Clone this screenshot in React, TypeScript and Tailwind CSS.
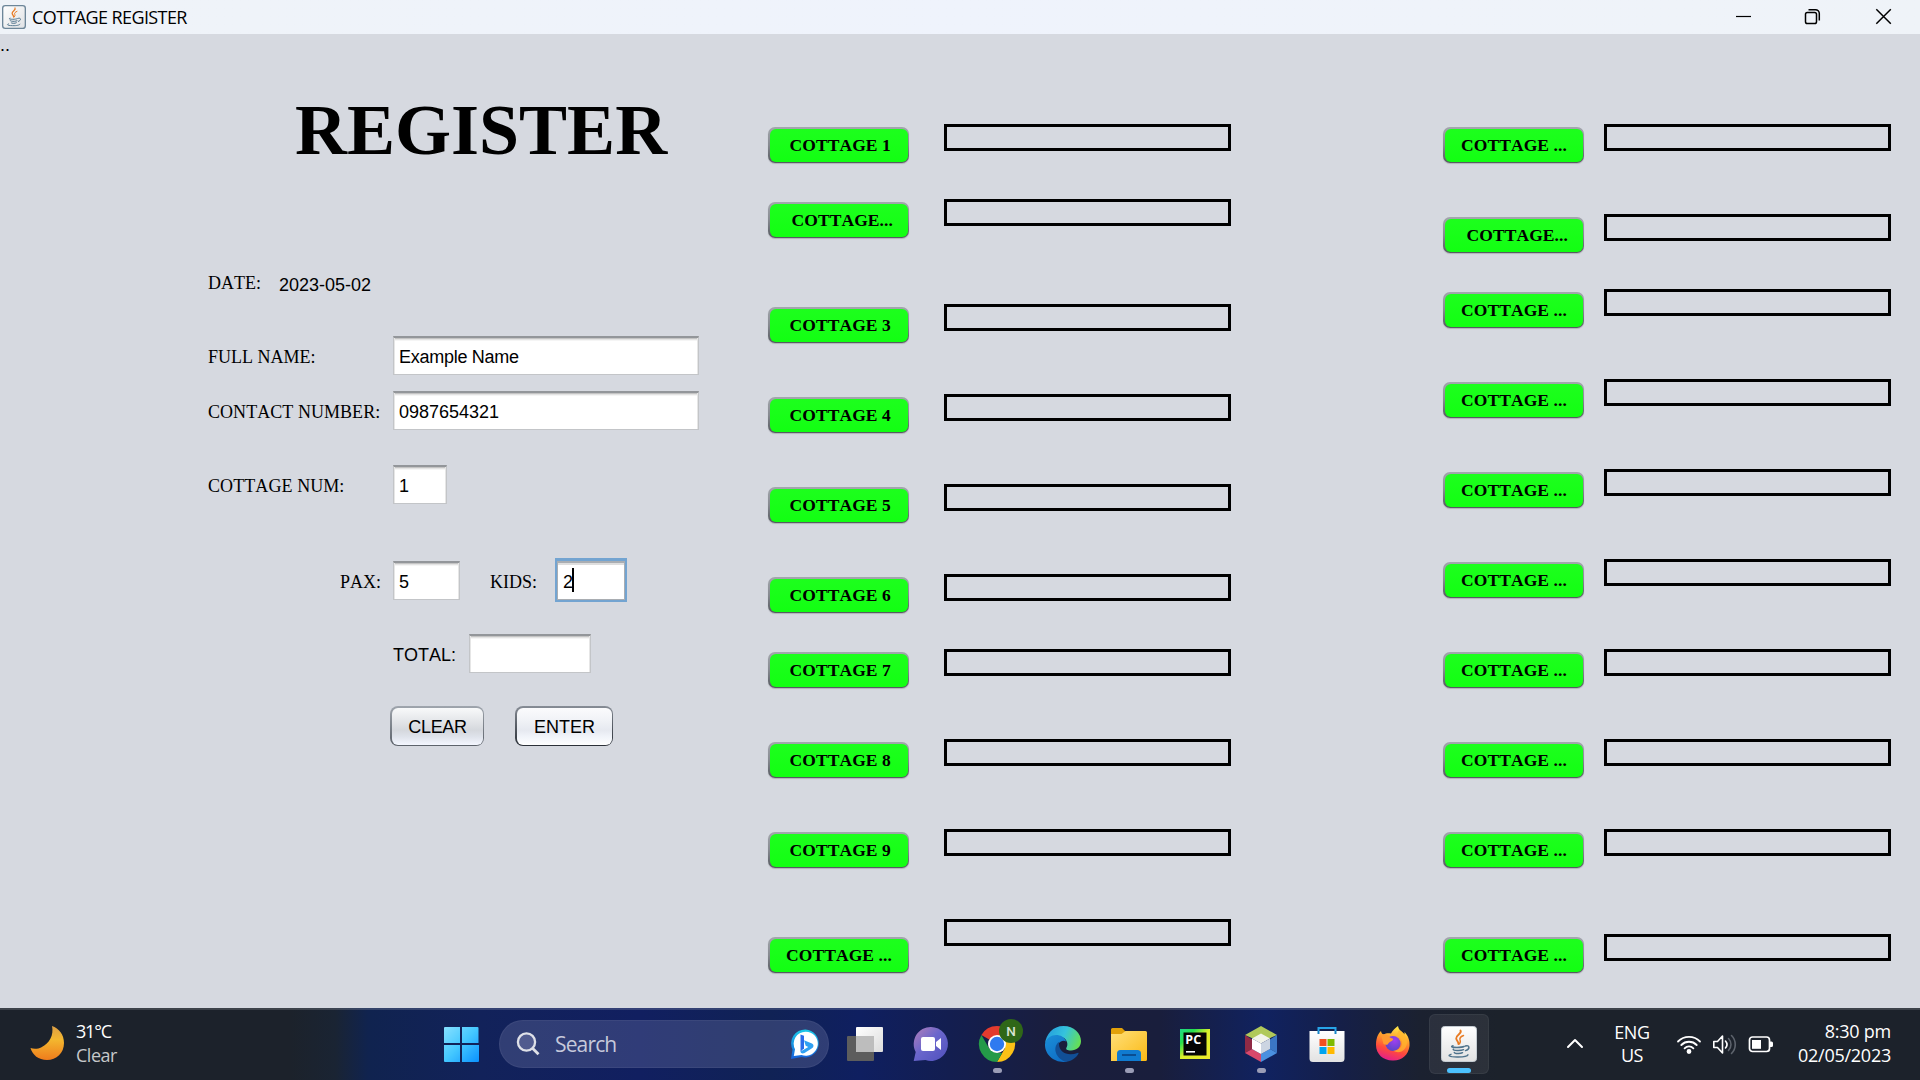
import React from "react";

const SERIF = "font-['Liberation_Serif','Times_New_Roman',serif] [font-kerning:none]";
const SANS = "font-['Liberation_Sans',Arial,sans-serif] [font-kerning:none]";

type Row = { label: string; row: string; shift?: string; pad?: string };

const leftRows: Row[] = [
  { label: "COTTAGE 1", row: "h-[75px]", pad: "pl-[20px]" },
  { label: "COTTAGE...", row: "h-[105px]", pad: "pl-[22px]" },
  { label: "COTTAGE 3", row: "h-[90px]", pad: "pl-[20px]" },
  { label: "COTTAGE 4", row: "h-[90px]", pad: "pl-[20px]" },
  { label: "COTTAGE 5", row: "h-[90px]", pad: "pl-[20px]" },
  { label: "COTTAGE 6", row: "h-[75px]", pad: "pl-[20px]" },
  { label: "COTTAGE 7", row: "h-[90px]", pad: "pl-[20px]" },
  { label: "COTTAGE 8", row: "h-[90px]", pad: "pl-[20px]" },
  { label: "COTTAGE 9", row: "h-[90px]", pad: "pl-[20px]" },
  { label: "COTTAGE ...", row: "h-[60px]", pad: "pl-[16.5px]", shift: "mt-[18px]" },
];

const rightRows: Row[] = [
  { label: "COTTAGE ...", row: "h-[90px]", pad: "pl-[16.5px]" },
  { label: "COTTAGE...", row: "h-[75px]", pad: "pl-[22px]" },
  { label: "COTTAGE ...", row: "h-[90px]", pad: "pl-[16.5px]" },
  { label: "COTTAGE ...", row: "h-[90px]", pad: "pl-[16.5px]" },
  { label: "COTTAGE ...", row: "h-[90px]", pad: "pl-[16.5px]" },
  { label: "COTTAGE ...", row: "h-[90px]", pad: "pl-[16.5px]" },
  { label: "COTTAGE ...", row: "h-[90px]", pad: "pl-[16.5px]" },
  { label: "COTTAGE ...", row: "h-[90px]", pad: "pl-[16.5px]" },
  { label: "COTTAGE ...", row: "h-[105px]", pad: "pl-[16.5px]" },
  { label: "COTTAGE ...", row: "h-[60px]", pad: "pl-[16.5px]" },
];

function CottageColumn({ rows, gap }: { rows: Row[]; gap: string }) {
  return (
    <div className="flex flex-col pt-[90px]">
      {rows.map((r, i) => (
        <div key={i} className={`flex items-start ${gap} ${r.row}`}>
          <button
            className={`${r.shift ?? "mt-[3px]"} h-[36px] w-[141px] shrink-0 rounded-[7px] bg-gradient-to-b from-[#a3a7ad] via-[#868a90] to-[#55595f] p-[1.5px] shadow-[0_1px_1px_rgba(0,0,0,0.18)]`}
          >
            <span
              className={`flex h-full w-full items-center rounded-[6px] bg-gradient-to-b from-[#1dff1d] to-[#12ff12] ${r.pad} ${SERIF} whitespace-pre pb-[1px] text-left text-[17.5px] font-bold leading-[20px] tracking-[0.08px] text-black`}
            >
              {r.label}
            </span>
          </button>
          <div className="h-[27px] w-[287px] shrink-0 border-[3px] border-black" />
        </div>
      ))}
    </div>
  );
}

function Field({ value, width, tracking = "" }: { value: string; width: string; tracking?: string }) {
  return (
    <div
      className={`${width} ${tracking} ${SANS} flex h-[39px] shrink-0 items-center border border-t-2 border-[#c3c5c8] border-t-[#93969a] bg-white pl-[5px] pt-[2px] text-[18px] leading-[20px] text-black shadow-[inset_1px_0_0_#e6e6e6,inset_-1px_0_0_#e6e6e6,inset_0_1px_0_#c4c4c4,inset_0_2px_0_#e4e4e4,inset_0_3px_0_#f5f5f5]`}
    >
      {value}
    </div>
  );
}

function Label({ children, className }: { children: React.ReactNode; className: string }) {
  return <div className={`${SERIF} shrink-0 whitespace-pre text-[18px] leading-[20px] text-black ${className}`}>{children}</div>;
}

function JavaCup() {
  return (
    <g fill="none" strokeLinecap="round">
      <path d="M19.5 4.5c2 3-4.800 4.500-4.300 8 .2 1.800 2.300 3 2.300 5.500" stroke="#e87a22" strokeWidth="1.900" />
      <path d="M22.500 9.500c-3 1.300-4 2.600-3.500 4.200.5 1.200 1 2-.5 4" stroke="#e87a22" strokeWidth="1.500" />
      <path d="M12 19.800c-3 .9-.5 1.600 4 1.600 3.200 0 6-.4 7-.9M12.300 23.200c-.8 1.600 7.500 1.900 10.200.5M13.300 26.400c.3 1.500 6.300 1.600 8.200.3M24.300 20c4.500-1.600 5 3.300.2 4.600" stroke="#4f738c" strokeWidth="1.500" />
      <path d="M10 28.300c-3.500 1-2.500 2.600 6 2.700 6 .1 10.500-.7 11-2.200" stroke="#4f738c" strokeWidth="1.400" />
    </g>
  );
}

function TitleBar() {
  return (
    <header className="flex h-[34px] items-center bg-gradient-to-r from-[#eff3f8] via-[#eff3fc] to-[#eff3f8]">
      <svg className="ml-[2px] h-[24px] w-[24px]" viewBox="0 0 36 36">
        <defs>
          <linearGradient id="jt" x1="0" y1="0" x2="1" y2="1">
            <stop offset="0" stopColor="#ffffff" />
            <stop offset="1" stopColor="#dfe1e4" />
          </linearGradient>
        </defs>
        <rect x="1" y="1" width="34" height="34" rx="4" fill="url(#jt)" stroke="#6d8699" strokeWidth="2" />
        <JavaCup />
      </svg>
      <h1 className="ml-[6px] font-['Open_Sans',sans-serif] text-[18px] leading-[24px] tracking-[-0.6px] text-black">
        COTTAGE REGISTER
      </h1>
      <div className="ml-auto flex items-center text-black">
        <svg className="h-[34px] w-[69px]" viewBox="0 0 69 34" fill="none" stroke="currentColor">
          <path d="M25 16.500h15" strokeWidth="1.200" />
        </svg>
        <svg className="h-[34px] w-[69px]" viewBox="0 0 69 34" fill="none" stroke="currentColor" strokeWidth="1.500">
          <rect x="25.500" y="12.500" width="11" height="11" rx="1.800" />
          <path d="M28.500 9.700h7a3.800 3.800 0 0 1 3.800 3.800v7" />
        </svg>
        <svg className="h-[34px] w-[71px]" viewBox="0 0 71 34" fill="none" stroke="currentColor" strokeWidth="1.500">
          <path d="M27.300 9.300l14.500 14.500M41.800 9.300l-14.500 14.500" />
        </svg>
      </div>
    </header>
  );
}

function RegisterForm() {
  return (
    <section className="w-[768px] shrink-0">
      <div className={`${SANS} h-[37px] pt-[1px] text-[18px] leading-[20px] text-black`}>..</div>
      <h2 className={`${SERIF} ml-[295px] mt-[19px] text-[72px] font-bold leading-[80px] text-black`}>REGISTER</h2>
      <div className="ml-[208px] mt-[103px] flex h-[24px] items-start">
        <Label className="w-[71px]">DATE:</Label>
        <div className={`${SANS} mt-[2px] text-[18px] leading-[20px] text-black`}>2023-05-02</div>
      </div>
      <div className="ml-[208px] mt-[39px] flex h-[39px] items-center">
        <Label className="w-[185px] pt-[3px]">FULL NAME:</Label>
        <Field value="Example Name" width="w-[306px]" tracking="tracking-[-0.27px]" />
      </div>
      <div className="ml-[208px] mt-[16px] flex h-[39px] items-center">
        <Label className="w-[185px] pt-[3px] tracking-[0.05px]">CONTACT NUMBER:</Label>
        <Field value="0987654321" width="w-[306px]" />
      </div>
      <div className="ml-[208px] mt-[35px] flex h-[39px] items-center">
        <Label className="w-[185px] pt-[3px] tracking-[0.08px]">COTTAGE NUM:</Label>
        <Field value="1" width="w-[54px]" />
      </div>
      <div className="ml-[340px] mt-[54px] flex h-[45px] items-center">
        <Label className="w-[53px] pt-[3px]">PAX:</Label>
        <Field value="5" width="w-[67px]" />
        <Label className="ml-[30px] w-[65px] pt-[3px]">KIDS:</Label>
        <div className="-mt-[1px] flex h-[44px] w-[72px] items-center border-[2.5px] border-t-[3px] border-[#73a4d1]">
          <div
            className={`${SANS} flex h-full w-full items-center border border-t-2 border-[#a9adb2] bg-white pl-[5px] pt-[1px] text-[18px] leading-[20px] text-black shadow-[inset_0_2px_0_#dedede]`}
          >
            <span>2</span>
            <span className="-ml-[1px] -mt-[4px] h-[24px] w-[2px] bg-black" />
          </div>
        </div>
      </div>
      <div className="ml-[393px] mt-[31px] flex h-[39px] items-center">
        <div className={`${SANS} w-[76px] pt-[2px] text-[18px] leading-[20px] text-black`}>TOTAL:</div>
        <Field value="" width="w-[122px]" />
      </div>
      <div className={`${SANS} ml-[390px] mt-[33px] flex gap-[32px] text-[18px] leading-[20px] text-black`}>
        <button className="h-[40px] w-[94px] rounded-[8px] bg-gradient-to-b from-[#9fa5ad] to-[#5c626a] p-[1.500px]">
          <span className="flex h-full w-full items-center justify-center rounded-[6px] bg-[linear-gradient(#f8f9fa_0%,#e4e6e9_35%,#d5d8dd_60%,#dfe3eb_78%,#f4f7ff_100%)] pt-[2px] pl-[1px] tracking-[-0.300px]">
            CLEAR
          </span>
        </button>
        <button className="-ml-[1px] h-[40px] w-[98px] rounded-[8px] bg-gradient-to-b from-[#878d96] to-[#2b3038] p-[1.500px]">
          <span className="flex h-full w-full items-center justify-center rounded-[6px] bg-[linear-gradient(#fbfbfd_0%,#f0f2f6_35%,#e6e9f0_60%,#f1f4fa_78%,#ffffff_100%)] pt-[2px] pl-[1px]">
            ENTER
          </span>
        </button>
      </div>
    </section>
  );
}

function TaskSlot({ children, running, active }: { children: React.ReactNode; running?: boolean; active?: boolean }) {
  return (
    <div className="relative flex h-[72px] w-[66px] shrink-0 items-center justify-center">
      {active && <div className="absolute left-[3px] top-[6px] h-[60px] w-[60px] rounded-[6px] border border-white/[0.05] bg-white/[0.07]" />}
      <svg className="relative h-[36px] w-[36px] overflow-visible" viewBox="0 0 36 36">
        {children}
      </svg>
      {running && <div className="absolute left-[29px] top-[60px] h-[5px] w-[9px] rounded-full bg-[#9a9db6]" />}
      {active && <div className="absolute left-[21px] top-[60px] h-[5px] w-[24px] rounded-full bg-[#4cc2ff]" />}
    </div>
  );
}

function Gradients() {
  return (
    <svg className="absolute h-0 w-0">
      <defs>
        <linearGradient id="moon" x1="0" y1="0" x2="0" y2="1">
          <stop offset="0" stopColor="#dd9f45" /><stop offset=".4" stopColor="#f3b72f" /><stop offset="1" stopColor="#ef7c1c" />
        </linearGradient>
        <linearGradient id="win" gradientUnits="userSpaceOnUse" x1="0" y1="0" x2="36" y2="36">
          <stop offset="0" stopColor="#8be2ff" /><stop offset=".5" stopColor="#45c8ff" /><stop offset="1" stopColor="#0a91ff" />
        </linearGradient>
        <linearGradient id="bing" x1="0" y1="0" x2="0" y2="1">
          <stop offset="0" stopColor="#1cc9e8" /><stop offset="1" stopColor="#1560dc" />
        </linearGradient>
        <linearGradient id="chat" x1="0" y1="0" x2="1" y2="1">
          <stop offset="0" stopColor="#b47fb8" /><stop offset=".45" stopColor="#6a66cc" /><stop offset="1" stopColor="#4f50bd" />
        </linearGradient>
        <linearGradient id="tvw" x1="0" y1="0" x2="1" y2="1">
          <stop offset="0" stopColor="#ffffff" /><stop offset="1" stopColor="#dcdcdc" />
        </linearGradient>
        <linearGradient id="edgeTop" x1="0" y1="0.300" x2="1" y2="0.600">
          <stop offset="0" stopColor="#249ddd" /><stop offset=".5" stopColor="#35c3dd" /><stop offset="1" stopColor="#66e052" />
        </linearGradient>
        <linearGradient id="edgeLow" x1="0" y1="0" x2="0.600" y2="1">
          <stop offset="0" stopColor="#1b8fd8" /><stop offset="1" stopColor="#0f6fc6" />
        </linearGradient>
        <linearGradient id="folder" x1="0" y1="0" x2="1" y2="1">
          <stop offset="0" stopColor="#ffe07a" /><stop offset="1" stopColor="#fbb914" />
        </linearGradient>
        <linearGradient id="pc" x1="0" y1="0" x2="1" y2="1">
          <stop offset="0" stopColor="#21d789" /><stop offset=".25" stopColor="#26e04d" /><stop offset=".5" stopColor="#d9f02b" /><stop offset="1" stopColor="#f0e92c" />
        </linearGradient>
        <linearGradient id="fox" x1="0.700" y1="0" x2="0.400" y2="1">
          <stop offset="0" stopColor="#fff04d" /><stop offset=".4" stopColor="#ff9a2a" /><stop offset=".7" stopColor="#ff4a3c" /><stop offset="1" stopColor="#e5208a" />
        </linearGradient>
        <radialGradient id="globe" cx=".6" cy=".3" r=".7">
          <stop offset="0" stopColor="#a040f0" /><stop offset="1" stopColor="#5a45c8" />
        </radialGradient>
        <linearGradient id="tile" x1="0" y1="0" x2="0" y2="1">
          <stop offset="0" stopColor="#ffffff" /><stop offset="1" stopColor="#e2e2e2" />
        </linearGradient>
      </defs>
    </svg>
  );
}

function Taskbar() {
  return (
    <footer className="relative flex h-[72px] items-center bg-[linear-gradient(90deg,#1c222b_0px,#1c222b_290px,#1a2433_335px,#10234f_368px,#12225a_480px,#111f60_640px,#102255_770px,#0f1f60_860px,#131e50_950px,#1a1e3c_1060px,#191e3c_1160px,#102260_1265px,#151f48_1340px,#1b2130_1420px,#1c222b_1500px,#1c222b_1920px)] font-['Open_Sans',sans-serif] shadow-[inset_0_2px_0_rgba(255,255,255,0.15)]">
      <Gradients />
      <svg className="mb-[2px] ml-[29px] h-[36px] w-[36px] shrink-0" viewBox="0 0 36 36">
        <path d="M23 1c7 2.500 12 8.500 12 17 0 10-7.500 17-17 17C9.500 35 3.500 30 1.500 23c3 1.200 7.500 1.200 11-.8C20.500 18.500 25 10 23 1z" fill="url(#moon)" />
      </svg>
      <div className="mb-[2px] ml-[11px] w-[367px] text-[18px] leading-[24px] text-white">
        <div className="tracking-[-1.200px]">31°C</div>
        <div className="tracking-[-0.500px] text-[#c6c8ca]">Clear</div>
      </div>
      <svg className="h-[36px] w-[36px] shrink-0" viewBox="0 0 36 36" fill="url(#win)">
        <path d="M2 1h15v16H1V2a1 1 0 0 1 1-1zM19 1h15.500a1 1 0 0 1 1 1v15H19zM1 19h16v17H2a1 1 0 0 1-1-1zM19 19h17v16a1 1 0 0 1-1 1H19z" />
      </svg>
      <div className="ml-[20px] flex h-[48px] w-[330px] shrink-0 items-center rounded-full border border-white/5 bg-[#7a80b0]/30">
        <svg className="ml-[16px] h-[24px] w-[24px]" viewBox="0 0 24 24" fill="none" stroke="#dfe1e8" strokeWidth="2.300">
          <circle cx="10.500" cy="10" r="8.600" fill="#9aa0cc" fillOpacity=".3" />
          <path d="M16.500 16.200l6 6" strokeWidth="2.800" />
        </svg>
        <span className="ml-[15px] text-[21px] leading-[28px] tracking-[-0.850px] text-[#c6c9db]">Search</span>
        <svg className="ml-auto mr-[8px] h-[32px] w-[30px]" viewBox="0 0 30 32">
          <path d="M15.500 1.500a14 14 0 1 1-4 27.600L1 31l1.500-9.500A14 14 0 0 1 15.500 1.500z" fill="url(#bing)" />
          <path d="M15.500 3.700a12 12 0 1 1-4 23.200L3.800 28l1.200-6.800A12 12 0 0 1 15.500 3.700z" fill="#fff" />
          <path d="M10.500 6.500l3.500 1.200v12.600l-3.500 3.400z" fill="#2a6bea" />
          <path d="M14 12.200l8 3.200c2 1 2 3.600 0 4.900L14.500 25c-2 1-4 .2-4-1.500l3.500-2 4.300-2.600-2.600-1.100z" fill="#2fa0f2" />
        </svg>
      </div>
      <div className="ml-[3px] flex">
        <TaskSlot>
          <rect x="0" y="10" width="27" height="25" rx="1" fill="#5d5d5d" />
          <rect x="9" y="1" width="27" height="25" rx="1" fill="url(#tvw)" />
          <path d="M9 10h18v16H10a1 1 0 0 1-1-1z" fill="#bdbdbd" />
        </TaskSlot>
        <TaskSlot>
          <path d="M18 1a17 17 0 1 1-5.500 33.100L.7 35l2-9A17 17 0 0 1 18 1z" fill="url(#chat)" />
          <rect x="8" y="11" width="14" height="14" rx="2" fill="#fff" />
          <path d="M23 16l5-4v12l-5-4z" fill="#fff" />
        </TaskSlot>
        <TaskSlot running>
          <path d="M18 18L2.400 9A18 18 0 0 1 33.600 9z" fill="#e33b2e" />
          <path d="M18 9h15.600A18 18 0 0 1 18 36l7.800-13.500z" fill="#fbc116" />
          <path d="M2.400 9l7.800 13.500L18 27h5.200L18 36A18 18 0 0 1 2.400 9z" fill="#249a48" />
          <circle cx="18" cy="18" r="9" fill="#fff" />
          <circle cx="18" cy="18" r="7.200" fill="#2f7af0" />
          <circle cx="32" cy="5" r="12" fill="#2f6718" />
          <text x="32" y="10" textAnchor="middle" fontSize="13.500" fontWeight="500" fill="#d9e3d3" fontFamily="Roboto, sans-serif">N</text>
        </TaskSlot>
        <TaskSlot>
          <path d="M0 18C1 8 8 0 18.500 0 29 0 36 7.500 36 15c0 6-4.500 9.500-10 9.500-4 0-5.500-1.200-4.500-3 1.700-2.700 1-7-2.500-9.500C13 8 3 9.500 0 18z" fill="url(#edgeTop)" />
          <path d="M0 18C2 9.500 11 7 17 10.500c2.500 1.500 3.800 3.500 4 5-2-1.700-6-.8-8.300 3-3 6 1 15 9.800 17C11 38-.5 29.500 0 18z" fill="url(#edgeLow)" />
          <path d="M14 16c-6 4-5 15 6 19.600 5 .6 11-3 13.500-8 .3-.8-.4-1-1-.7C23 30.500 14 26.500 14 18z" fill="#114f96" />
        </TaskSlot>
        <TaskSlot running>
          <path d="M0 3.500A1.500 1.500 0 0 1 1.500 2H11l4 4v4H0z" fill="#e2a10a" />
          <path d="M0 8h10.500l4-3H34.500A1.500 1.500 0 0 1 36 6.500V33.500A1.500 1.500 0 0 1 34.500 35H0z" fill="url(#folder)" />
          <path d="M6 35v-7.500a3.500 3.500 0 0 1 3.500-3.500h17a3.500 3.500 0 0 1 3.500 3.500V35z" fill="#107bd0" />
          <path d="M11 29h14" stroke="#0a4d91" strokeWidth="2" />
        </TaskSlot>
        <TaskSlot>
          <rect x="3" y="3" width="30" height="30" fill="url(#pc)" />
          <rect x="6.500" y="6.500" width="23" height="23" fill="#050505" />
          <text x="8.300" y="18" fontSize="12.500" fontWeight="700" fill="#fff" fontFamily="Open Sans, sans-serif">PC</text>
          <rect x="9" y="25" width="9" height="1.600" fill="#fff" />
        </TaskSlot>
        <TaskSlot running>
          <path d="M18 0l16 9-9 4-7-4-7 4-9-4z" fill="#b0c95a" />
          <path d="M2 9l7 4.500v9.500l-7 4z" fill="#8f2a45" />
          <path d="M2 27l7-4 9 5v8z" fill="#d9486b" />
          <path d="M34 9l-7 4.500v9.500l7 4z" fill="#3b76c4" />
          <path d="M34 27l-7-4-9 5v8z" fill="#4a90e0" />
          <path d="M18 7.500l9 5-9 5-9-5z" fill="#f1f3ea" />
          <path d="M9 12.500l9 5v10.500l-9-5z" fill="#fff" />
          <path d="M27 12.500l-9 5v10.500l9-5z" fill="#ccd5e2" />
        </TaskSlot>
        <TaskSlot>
          <path d="M9.500 8V2h17v6" fill="none" stroke="#27a4e8" strokeWidth="2" />
          <path d="M.5 5h35v27.500a3.500 3.500 0 0 1-3.500 3.500H4a3.500 3.500 0 0 1-3.500-3.500z" fill="url(#tile)" />
          <path d="M9.500 5v3M26.500 5v3" stroke="#1783c6" strokeWidth="2" />
          <rect x="10.500" y="13" width="7" height="7" fill="#f25022" />
          <rect x="18.500" y="13" width="7" height="7" fill="#7fba00" />
          <rect x="10.500" y="21" width="7" height="7" fill="#00a4ef" />
          <rect x="18.500" y="21" width="7" height="7" fill="#ffb900" />
        </TaskSlot>
        <TaskSlot>
          <path d="M3 9c.8-1.200 1.500-3 3-4 .3 2 1 3 2.500 3.500C11 7 13.500 7 16 7.500 17.500 4 20.500 2 23 0c.5 3 2 4.500 4 6 1 .9 1.800 1.600 2.500 2.500V6c4 4 5.500 9 5 14-1 9-8 15-17 14.500C8 34.500 1 28 1 19c0-4 .7-7.500 2-10z" fill="url(#fox)" />
          <circle cx="18" cy="17.500" r="7.600" fill="url(#globe)" />
          <path d="M6 9c4-2 7 .8 9 2.500 1.500 1 3.500.7 3 2.200-.8 1.800-3.500 1.800-4.500 3.600-.8 2.200-3.500 1.500-5 .7z" fill="#ff9a30" />
          <path d="M21 10c3 0 6 3 6 7-.2 5-5 8-9 7.600 7 4.500 14-1 14-8.600C31.500 9 27 5 24 4z" fill="#ffb52e" opacity=".75" />
        </TaskSlot>
        <TaskSlot active>
          <rect x=".5" y=".5" width="35" height="35" rx="3" fill="url(#tile)" stroke="#c5ccd2" />
          <JavaCup />
        </TaskSlot>
      </div>
      <svg className="ml-[73px] h-[20px] w-[20px] shrink-0" viewBox="0 0 20 20" fill="none" stroke="#fff" strokeWidth="2" strokeLinecap="round" strokeLinejoin="round">
        <path d="M3 13l7-7 7 7" />
      </svg>
      <div className="ml-[25px] w-[44px] text-center text-[18px] leading-[23px] tracking-[-0.400px] text-white">
        <div>ENG</div>
        <div>US</div>
      </div>
      <svg className="ml-[22px] h-[24px] w-[26px] shrink-0" viewBox="0 0 26 24" fill="none" stroke="#fff" strokeWidth="1.800" strokeLinecap="round">
        <path d="M2 9.500a15.500 15.500 0 0 1 22 0M5.300 13a10.800 10.800 0 0 1 15.400 0M8.600 16.300a6.200 6.200 0 0 1 8.800 0" />
        <circle cx="13" cy="19.500" r="1.500" fill="#fff" />
      </svg>
      <svg className="ml-[10px] h-[24px] w-[26px] shrink-0" viewBox="0 0 26 24" fill="none" stroke="#fff" strokeWidth="1.600" strokeLinecap="round" strokeLinejoin="round">
        <path d="M1.800 9.500h3.700l5-5.500v17l-5-5.500H1.800zM13.500 9c1.700 2 1.700 5 0 7" />
        <path d="M16.500 6.500c3.300 3.500 3.300 8.500 0 12M19.500 3.500c5 5 5 13 0 18" stroke="#5d636c" />
      </svg>
      <svg className="ml-[10px] h-[24px] w-[26px] shrink-0" viewBox="0 0 26 24" fill="none" stroke="#fff" strokeWidth="1.700">
        <rect x="1.500" y="5" width="20" height="14.500" rx="3" />
        <rect x="4" y="8" width="9" height="8.800" fill="#fff" stroke="none" />
        <path d="M22 9.500h1.500a1.500 1.500 0 0 1 1.500 1.500v2.500a1.500 1.500 0 0 1-1.500 1.500H22z" fill="#fff" stroke="none" />
      </svg>
      <div className="mb-[2px] ml-auto mr-[29px] text-right text-[18px] leading-[24px] tracking-[-0.250px] text-white">
        <div>8:30 pm</div>
        <div>02/05/2023</div>
      </div>
    </footer>
  );
}

export default function App() {
  return (
    <div className="flex h-[1080px] w-[1920px] flex-col overflow-hidden bg-[#d6d9e0]">
      <TitleBar />
      <main className="flex h-[974px]">
        <RegisterForm />
        <CottageColumn rows={leftRows} gap="gap-[35px]" />
        <div className="w-[212px] shrink-0" />
        <CottageColumn rows={rightRows} gap="gap-[20px]" />
      </main>
      <Taskbar />
    </div>
  );
}
